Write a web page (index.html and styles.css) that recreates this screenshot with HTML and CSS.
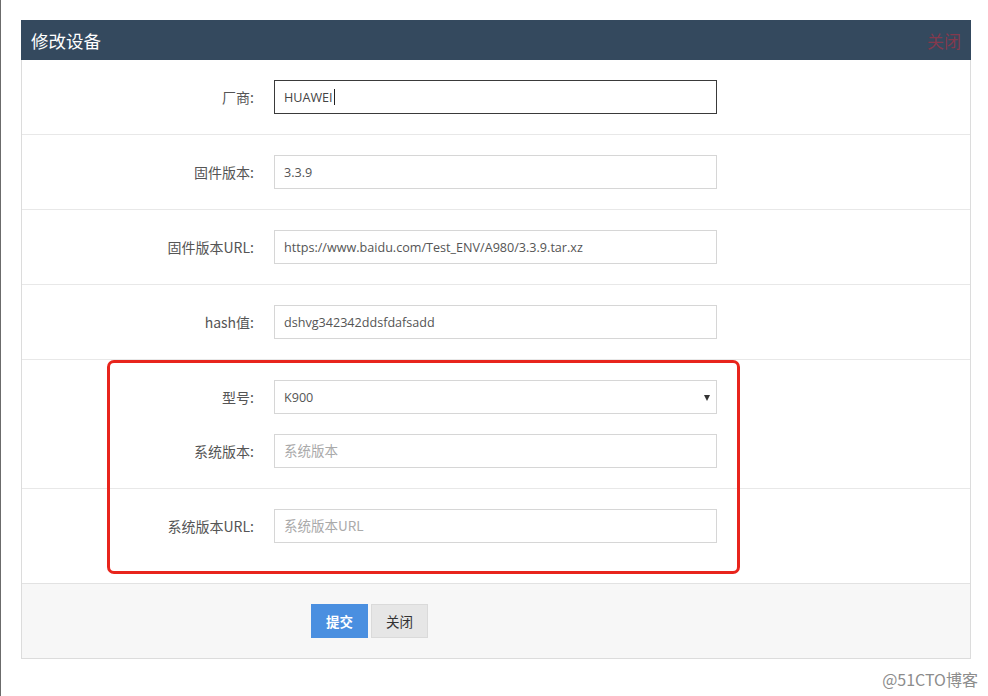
FILE: index.html
```html
<!DOCTYPE html>
<html lang="zh-CN">
<head>
<meta charset="utf-8">
<title>修改设备</title>
<link rel="stylesheet" href="styles.css">
</head>
<body>
<div class="edge"></div>
<div class="panel">
  <div class="panel-head">
    <span class="title">修改设备</span>
    <span class="head-close">关闭</span>
  </div>
  <div class="panel-body">
    <div class="row">
      <div class="field">
        <label class="lbl">厂商:</label>
        <div class="input focused">HUAWEI<span class="caret"></span></div>
      </div>
    </div>
    <div class="row">
      <div class="field">
        <label class="lbl">固件版本:</label>
        <input class="input" type="text" value="3.3.9">
      </div>
    </div>
    <div class="row">
      <div class="field">
        <label class="lbl">固件版本URL:</label>
        <input class="input" type="text" value="https://www.baidu.com/Test_ENV/A980/3.3.9.tar.xz">
      </div>
    </div>
    <div class="row">
      <div class="field">
        <label class="lbl">hash值:</label>
        <input class="input" type="text" value="dshvg342342ddsfdafsadd">
      </div>
    </div>
    <div class="row">
      <div class="field">
        <label class="lbl">型号:</label>
        <div class="input select">K900<span class="arrow"></span></div>
      </div>
      <div class="field">
        <label class="lbl">系统版本:</label>
        <input class="input" type="text" placeholder="系统版本">
      </div>
    </div>
    <div class="row last">
      <div class="field">
        <label class="lbl">系统版本URL:</label>
        <input class="input" type="text" placeholder="系统版本URL">
      </div>
    </div>
    <div class="panel-foot">
      <button class="btn btn-primary">提交</button>
      <button class="btn btn-default">关闭</button>
    </div>
  </div>
</div>
<div class="highlight"></div>
<div class="watermark">@51CTO博客</div>
</body>
</html>
```

FILE: styles.css
```css
html, body {
  margin: 0;
  padding: 0;
  background: #ffffff;
}
body {
  width: 988px;
  height: 696px;
  position: relative;
  overflow: hidden;
  font-family: "Open Sans", "Noto Sans CJK SC", sans-serif;
  font-size: 13px;
  color: #555;
}
.edge {
  position: absolute;
  left: 0;
  top: 0;
  width: 1px;
  height: 696px;
  background: #6b6b6b;
}
.panel {
  margin: 20px 0 0 21px;
  width: 950px;
}
.panel-head {
  height: 40px;
  background: #34495e;
  display: flex;
  align-items: center;
  justify-content: space-between;
  padding: 0 10px;
}
.title {
  color: #ffffff;
  font-family: "Noto Sans CJK SC", sans-serif;
  font-size: 17.5px;
}
.head-close {
  color: #83394d;
  font-family: "Noto Sans CJK SC", sans-serif;
  font-size: 17px;
}
.panel-body {
  border-left: 1px solid #dcdcdc;
  border-right: 1px solid #dcdcdc;
  width: 948px;
}
.row {
  padding: 20px 0;
  border-bottom: 1px solid #e8e8e8;
  display: flex;
  flex-direction: column;
  gap: 20px;
}
.row.last {
  padding-bottom: 40px;
  border-bottom: none;
}
.field {
  display: grid;
  grid-template-columns: 232px 443px;
  column-gap: 20px;
  align-items: center;
}
.lbl {
  text-align: right;
  font-family: "Noto Sans CJK SC", sans-serif;
  font-size: 14px;
  color: #555;
}
.input {
  box-sizing: border-box;
  height: 34px;
  width: 443px;
  margin: 0;
  padding: 0 9px;
  border: 1px solid #d6d6d6;
  background: #ffffff;
  font-family: "Open Sans", "Noto Sans CJK SC", sans-serif;
  font-size: 12.6px;
  color: #555;
  outline: none;
  display: flex;
  align-items: center;
}
.input::placeholder {
  color: #aaaaaa;
  font-family: "Noto Sans CJK SC", sans-serif;
  font-size: 13.5px;
}
.input.focused {
  border-color: #3a3a3a;
  color: #444;
}
.caret {
  display: inline-block;
  width: 1px;
  height: 16px;
  background: #222;
  margin-left: 1px;
}
.select {
  position: relative;
}
.arrow {
  position: absolute;
  right: 6px;
  top: 14px;
  width: 0;
  height: 0;
  border-left: 3.5px solid transparent;
  border-right: 3.5px solid transparent;
  border-top: 6px solid #333;
}
.panel-foot {
  background: #f7f7f7;
  border-top: 1px solid #e2e2e2;
  border-bottom: 1px solid #dcdcdc;
  padding: 20px 0 20px 289px;
  display: flex;
  gap: 3px;
}
.btn {
  height: 34px;
  width: 57px;
  border: 1px solid transparent;
  font-family: "Noto Sans CJK SC", sans-serif;
  font-size: 13.5px;
  padding: 0;
  cursor: pointer;
}
.btn-primary {
  background: #4a8fe0;
  color: #ffffff;
  font-weight: bold;
}
.btn-default {
  background: #e6e6e6;
  border-color: #dadada;
  color: #333;
}
.highlight {
  position: absolute;
  left: 107px;
  top: 360px;
  width: 627px;
  height: 208px;
  border: 3px solid #e8241c;
  border-radius: 7px;
}
.watermark {
  position: absolute;
  right: 10px;
  top: 667px;
  font-family: "Noto Sans CJK SC", sans-serif;
  font-size: 16px;
  color: #8c8c8c;
}
```
